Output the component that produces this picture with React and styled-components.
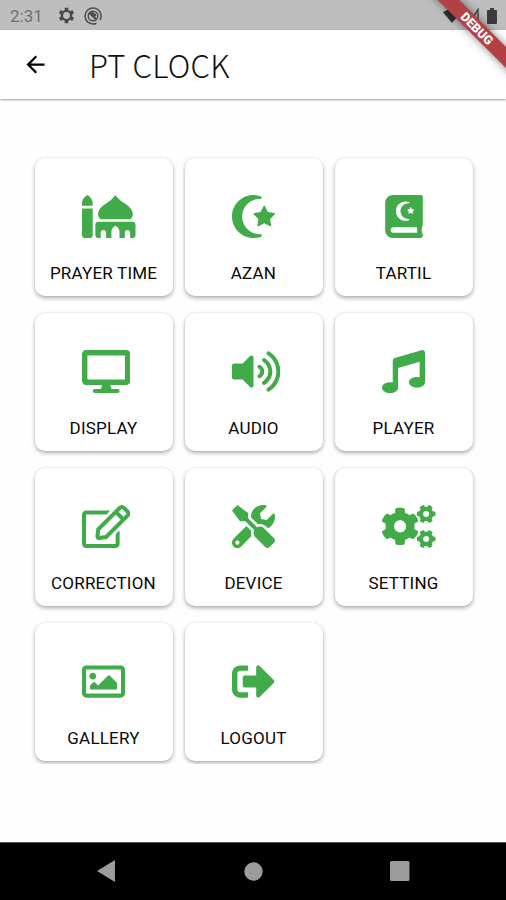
import styled, { createGlobalStyle } from 'styled-components';
import {
    FaMosque, FaStarAndCrescent, FaQuran, FaDesktop, FaVolumeUp, FaMusic,
    FaRegEdit, FaTools, FaCogs, FaRegImage, FaSignOutAlt
} from 'react-icons/fa';
import { MdArrowBack } from 'react-icons/md';

const GlobalStyle = createGlobalStyle`
    * { box-sizing: border-box; }
    body {
        margin: 0;
        background: #fff;
        font-family: Roboto, "Liberation Sans", sans-serif;
    }
`

const Screen = styled.div`
    position: relative;
    display: flex;
    flex-direction: column;
    width: 506px;
    height: 900px;
    background: #fefefe;
    overflow: hidden;
`

const StatusBar = styled.div`
    display: flex;
    align-items: center;
    justify-content: space-between;
    flex: none;
    height: 30px;
    padding: 1px 9px 0 10px;
    background: #bebebe;
    color: #4a4a4a;
`

const StatusGroup = styled.div`
    display: flex;
    align-items: center;
    gap: ${props => props.$gap};
`

const Time = styled.span`
    width: 39px;
    font-size: 17px;
    line-height: 20px;
    color: #707070;
`

const AppBar = styled.header`
    display: flex;
    align-items: center;
    flex: none;
    height: 69px;
    padding: 0 22px;
    gap: 40px;
    background: #fff;
    box-shadow: 0 1px 2px rgba(0, 0, 0, 0.38);
`

const BackButton = styled.button`
    display: flex;
    padding: 0;
    border: 0;
    background: none;
    color: #000;
    font-size: 27px;
`

const Title = styled.h1`
    margin: 0;
    font-family: "Noto Sans CJK SC", "Noto Sans", sans-serif;
    font-size: 31px;
    font-weight: 300;
    line-height: 40px;
    letter-spacing: 0.2px;
    color: #111;
`

const Content = styled.main`
    flex: 1;
    padding: 55px 30px 0;
`

const MenuGrid = styled.div`
    display: grid;
    grid-template-columns: repeat(3, 138px);
    gap: 17px 12px;
    padding: 4px 3px 3px 5px;
    overflow: hidden;
`

const Card = styled.button`
    display: flex;
    flex-direction: column;
    align-items: center;
    height: 138px;
    padding: 37px 1px 0 0;
    border: 0;
    border-radius: 10px;
    background: #fff;
    box-shadow: 0 2px 4px rgba(0, 0, 0, 0.32), 0 0 2px rgba(0, 0, 0, 0.08);
    font-family: inherit;
`

/* wide glyphs start at the box edge and run over on the right */
const IconBox = styled.span`
    display: flex;
    justify-content: safe center;
    width: 43px;
    height: 43px;
    color: #42ab49;

    svg {
        flex: none;
        width: ${props => props.$glyph}px;
        height: 43px;
    }
`

const Label = styled.span`
    margin-top: 25px;
    font-size: 17px;
    line-height: 20px;
    letter-spacing: 0.2px;
    white-space: nowrap;
    color: #080808;
`

const NavBar = styled.nav`
    display: flex;
    align-items: center;
    justify-content: space-between;
    flex: none;
    height: 58px;
    padding: 0 96px 1px;
    background: #000;
    border-top: 1px solid #555;
    color: #9c9c9c;
`

const DebugBanner = styled.div`
    position: absolute;
    top: 21px;
    left: 417px;
    width: 120px;
    height: 15px;
    transform: rotate(45deg);
    background: #b54043;
    box-shadow: 0 0 8px rgba(0, 0, 0, 0.5);
    color: #fff;
    font-size: 12.5px;
    font-weight: 900;
    line-height: 15px;
    text-align: center;
`

const menu = [
    { title: 'PRAYER TIME', Icon: FaMosque, glyph: 53.5 },
    { title: 'AZAN', Icon: FaStarAndCrescent, glyph: 43 },
    { title: 'TARTIL', Icon: FaQuran, glyph: 38 },
    { title: 'DISPLAY', Icon: FaDesktop, glyph: 48.4 },
    { title: 'AUDIO', Icon: FaVolumeUp, glyph: 48.4 },
    { title: 'PLAYER', Icon: FaMusic, glyph: 43 },
    { title: 'CORRECTION', Icon: FaRegEdit, glyph: 48.4 },
    { title: 'DEVICE', Icon: FaTools, glyph: 43 },
    { title: 'SETTING', Icon: FaCogs, glyph: 53.5 },
    { title: 'GALLERY', Icon: FaRegImage, glyph: 43 },
    { title: 'LOGOUT', Icon: FaSignOutAlt, glyph: 43 },
]

function Status() {
    return (
        <StatusBar>
            <StatusGroup $gap="9px">
                <Time>2:31</Time>
                <svg width="17" height="17" viewBox="0 0 17 17" fill="none" stroke="currentColor">
                    <circle cx="8.5" cy="8.5" r="4.6" strokeWidth="2.4" />
                    <path d="M8.5 .8v3M8.5 13.2v3M1.8 4.6l2.6 1.5M12.6 10.9l2.6 1.5M1.8 12.4l2.6-1.5M12.6 6.1l2.6-1.5" strokeWidth="3.6" />
                </svg>
                <svg width="18" height="18" viewBox="0 0 18 18" fill="none" stroke="currentColor">
                    <path d="M12.5 16.2A8 8 0 1 1 16 13" strokeWidth="1.5" />
                    <circle cx="9" cy="9" r="4.8" strokeWidth="1.4" />
                    <path d="M5.5 6l6.5 6M7 5.5l5 3" strokeWidth="2.2" />
                </svg>
            </StatusGroup>
            <StatusGroup $gap="8px">
                <svg width="18" height="14" viewBox="0 0 18 14">
                    <path d="M0 3.2Q9-3.2 18 3.2L9 14z" fill="#333" />
                </svg>
                <svg width="10" height="15" viewBox="0 0 10 15">
                    <path d="M9 1.5v12.5H1z" fill="none" stroke="#444" strokeWidth="1.4" />
                </svg>
                <svg width="10" height="16" viewBox="0 0 10 16">
                    <path d="M3 0h4v2h2q1 0 1 1v12q0 1-1 1H1q-1 0-1-1V3q0-1 1-1h2z" fill="#3c3c3c" />
                </svg>
            </StatusGroup>
        </StatusBar>
    )
}

function Menu() {
    return (
        <MenuGrid>
            {
                menu.map(({ title, Icon, glyph }) => (
                    <Card key={title}>
                        <IconBox $glyph={glyph}><Icon /></IconBox>
                        <Label>{title}</Label>
                    </Card>
                ))
            }
        </MenuGrid>
    )
}

function SystemNav() {
    return (
        <NavBar>
            <svg width="19" height="22" viewBox="0 0 19 22"><path d="M19 0v22L1 11z" fill="currentColor" /></svg>
            <svg width="20" height="19" viewBox="0 0 20 19"><circle cx="10.5" cy="9.5" r="9.2" fill="currentColor" /></svg>
            <svg width="20" height="20" viewBox="0 0 20 20"><rect width="19.5" height="20" rx="1.5" fill="currentColor" /></svg>
        </NavBar>
    )
}

export default function App() {
    return (
        <Screen>
            <GlobalStyle />
            <Status />
            <AppBar>
                <BackButton aria-label="Back"><MdArrowBack /></BackButton>
                <Title>PT CLOCK</Title>
            </AppBar>
            <Content>
                <Menu />
            </Content>
            <SystemNav />
            <DebugBanner>DEBUG</DebugBanner>
        </Screen>
    )
}
